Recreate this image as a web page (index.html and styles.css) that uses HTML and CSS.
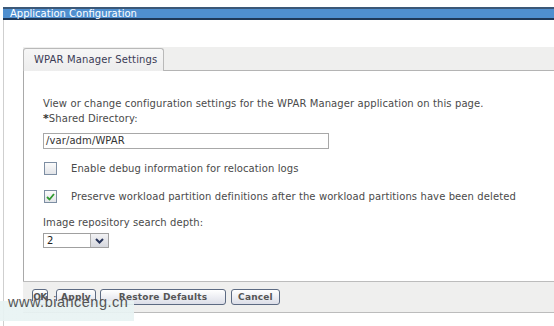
FILE: index.html
```html
<!DOCTYPE html>
<html lang="en">
<head>
  <meta charset="UTF-8">
  <title>Application Configuration</title>
  <link rel="stylesheet" href="styles.css">
</head>
<body>
  <div class="title-bar">Application Configuration</div>
  <div class="window">
    <div class="tabs">
      <div class="tab">WPAR Manager Settings</div>
    </div>
    <div class="panel">
      <p class="intro">View or change configuration settings for the WPAR Manager application on this page.</p>
      <label class="field-label"><span class="req">*</span>Shared Directory:</label>
      <div class="text-input">/var/adm/WPAR</div>
      <div class="check-row first">
        <span class="check"></span>
        <span>Enable debug information for relocation logs</span>
      </div>
      <div class="check-row">
        <span class="check">
          <svg width="9" height="8" viewBox="0 0 9 8"><polyline points="1,4 3.5,6.5 8,1" fill="none" stroke="#2f9a2f" stroke-width="1.8"/></svg>
        </span>
        <span>Preserve workload partition definitions after the workload partitions have been deleted</span>
      </div>
      <label class="field-label depth">Image repository search depth:</label>
      <div class="select">
        <span class="select-value">2</span>
        <span class="select-btn">
          <svg width="9" height="6" viewBox="0 0 9 6"><polyline points="1,1 4.5,4.5 8,1" fill="none" stroke="#27345a" stroke-width="2"/></svg>
        </span>
      </div>
    </div>
    <div class="footer">
      <button class="btn ok">OK</button>
      <button class="btn apply">Apply</button>
      <button class="btn restore">Restore Defaults</button>
      <button class="btn cancel">Cancel</button>
    </div>
  </div>
  <div class="watermark">www.bianceng.cn</div>
</body>
</html>
```

FILE: styles.css
```css
body {
  margin: 0;
  padding: 7px 0 0 0;
  background: #fff;
  color: #4a4a4a;
  font-family: 'DejaVu Sans', Verdana, sans-serif;
  font-size: 10px;
  letter-spacing: 0.1px;
  overflow: hidden;
  position: relative;
  height: 319px;
}

.title-bar {
  margin-left: 3px;
  height: 9px;
  line-height: 9px;
  padding-left: 7px;
  background: #4f8fd0;
  border-top: 2px solid #3b5878;
  border-bottom: 2px solid #1f3858;
  color: #fff;
  font-size: 10px;
  letter-spacing: 0;
}

.window {
  margin-left: 3px;
  border-left: 1px solid #cfcfcf;
  padding: 27px 0 20px 19px;
}

.tabs {
  display: flex;
  align-items: flex-end;
  height: 23px;
  background: #efefee;
  border-bottom: 1px solid #b4b4b4;
}

.tab {
  width: 129px;
  height: 22px;
  margin-bottom: -1px;
  padding-left: 10px;
  line-height: 22px;
  font-size: 10px;
  letter-spacing: 0.15px;
  color: #3b3b55;
  background: linear-gradient(#f6f6f6, #ededed);
  border: 1px solid #b9b9b9;
  border-bottom: none;
  border-radius: 3px 3px 0 0;
}

.panel {
  height: 210px;
  border-left: 1px solid #a9a9a9;
  padding-left: 19px;
}

.intro {
  margin: 0;
  padding-top: 27px;
  line-height: 12px;
}

.field-label {
  display: block;
  margin-top: 3px;
  line-height: 12px;
}

.req {
  font-weight: bold;
  color: #333;
  font-size: 11px;
}

.text-input {
  width: 282px;
  height: 14px;
  margin-top: 8px;
  padding-left: 2px;
  line-height: 14px;
  border: 1px solid #a8a8a8;
  color: #333;
}

.check-row {
  display: flex;
  align-items: center;
  gap: 14px;
  height: 13px;
  margin-top: 15px;
  padding-left: 1px;
}

.check-row.first {
  margin-top: 13px;
}

.check {
  display: flex;
  align-items: center;
  justify-content: center;
  width: 11px;
  height: 11px;
  border: 1px solid #7d8ea3;
  background: linear-gradient(#fbfbfb, #e2e4e8);
}

.field-label.depth {
  margin-top: 14px;
}

.select {
  display: flex;
  width: 64px;
  height: 13px;
  margin-top: 4px;
  border: 1px solid #a0a0a0;
  line-height: 13px;
}

.select-value {
  flex: 1;
  padding-left: 3px;
  color: #222;
}

.select-btn {
  display: flex;
  align-items: center;
  justify-content: center;
  width: 17px;
  background: linear-gradient(#f2f2f4, #d6d8de);
  border-left: 1px solid #b0b0b0;
}

.footer {
  display: flex;
  gap: 4px;
  height: 23px;
  padding: 7px 0 0 9px;
  background: #efefee;
  border-top: 1px solid #bcbcbc;
  border-bottom: 1px solid #bcbcbc;
}

.btn {
  height: 16px;
  padding: 0;
  font-family: 'DejaVu Sans', Verdana, sans-serif;
  font-size: 9px;
  font-weight: bold;
  letter-spacing: 0.2px;
  color: #555;
  background: linear-gradient(#ffffff, #dcdee8);
  border: 1px solid #5c6a82;
  border-radius: 3px;
}

.ok {
  width: 16px;
  margin-right: 4px;
  letter-spacing: -0.6px;
}

.apply {
  width: 40px;
}

.restore {
  width: 126px;
}

.cancel {
  width: 49px;
  margin-left: 1px;
}

.watermark {
  position: absolute;
  left: 0;
  top: 293px;
  width: 126px;
  height: 28px;
  padding-left: 8px;
  background: linear-gradient(transparent 8px, rgba(232, 243, 243, 0.92) 8px);
  color: #555;
  font-family: 'Liberation Sans', Arial, sans-serif;
  font-size: 14.5px;
  letter-spacing: 0.5px;
  line-height: 18px;
}
```
